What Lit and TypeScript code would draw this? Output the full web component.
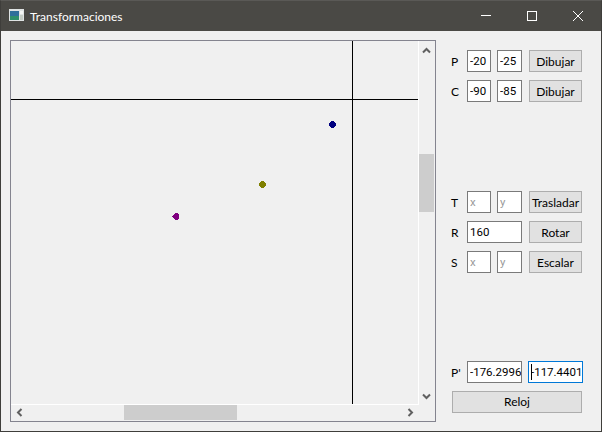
import { LitElement, css, html, svg } from 'lit';
import { customElement } from 'lit/decorators.js';

const chevron = (d: string) => html`<svg class="arrow" width="16" height="16" viewBox="0 0 16 16"><path d=${d} fill="none" stroke="#606060" stroke-width="2"></path></svg>`;

const ROUND = 'M2 0H5V1H6V2H7V5H6V6H5V7H2V6H1V5H0V2H1V1H2Z';
// the purple one has a stray pixel on its left side
const NUBBED = 'M3 0H6V1H7V6H6V7H3V6H2V5H1V4H0V3H1V2H2V1H3Z';

// 7px pixel-stepped dot, x/y is the top left of its box
const dot = (x: number, y: number, color: string, d = ROUND) => svg`<path transform="translate(${x} ${y})" fill=${color} shape-rendering="crispEdges" d=${d}></path>`;

@customElement('app-root')
export class AppRoot extends LitElement {
  static styles = css`
    :host {
      display: block;
      width: 602px;
      height: 432px;
      font-family: Lato, "Open Sans", sans-serif;
      font-size: 12px;
      color: #000;
    }

    .window {
      box-sizing: border-box;
      width: 602px;
      height: 432px;
      display: flex;
      flex-direction: column;
      background: #f0f0f0;
      border: 1px solid #3f3e3b;
      border-top-color: #5a5956;
    }

    .titlebar {
      height: 30px;
      flex: none;
      display: flex;
      align-items: center;
      background: #4a4945;
      color: #fff;
    }

    .app-icon {
      margin: -2px 6px 0 8px;
      flex: none;
    }

    .title {
      flex: 1;
    }

    .ctl {
      width: 46px;
      height: 30px;
      display: flex;
      align-items: center;
      justify-content: center;
    }

    .body {
      flex: 1;
      display: flex;
      padding: 9px 0 0 9px;
      gap: 15px;
    }

    .frame {
      box-sizing: border-box;
      width: 426px;
      height: 382px;
      border: 1px solid #84848f;
      display: grid;
      grid-template-columns: 408px 16px;
      grid-template-rows: 364px 16px;
    }

    .view {
      border-right: 1px solid #fff;
      border-bottom: 1px solid #fff;
      overflow: hidden;
    }

    .view svg {
      display: block;
    }

    .vbar,
    .hbar {
      display: flex;
      justify-content: space-between;
      position: relative;
    }

    .vbar {
      flex-direction: column;
    }

    .arrow {
      display: block;
    }

    .vbar .thumb {
      position: absolute;
      left: 0;
      top: 113px;
      width: 15px;
      height: 58px;
      background: #cdcdcd;
    }

    .hbar .thumb {
      position: absolute;
      left: 113px;
      top: 0;
      width: 113px;
      height: 15px;
      background: #cdcdcd;
    }

    .panel {
      display: flex;
      flex-direction: column;
      padding-top: 10px;
      gap: 8px;
    }

    .row {
      display: flex;
      height: 22px;
      align-items: center;
    }

    .row.sep-t {
      margin-top: 81px;
    }

    .row.sep-p {
      margin-top: 80px;
    }

    .lbl {
      width: 16px;
      flex: none;
    }

    input {
      box-sizing: border-box;
      height: 22px;
      padding: 0 2px;
      margin: 0;
      border: 1px solid #7a7a7a;
      border-radius: 0;
      background: #fff;
      font-family: Roboto, sans-serif;
      font-size: 11.5px;
      color: #000;
      outline: none;
      flex: none;
    }

    input::placeholder {
      color: #9a9a9a;
      opacity: 1;
    }

    .w24 {
      width: 24px;
    }

    .w25 {
      width: 25px;
      margin-left: 6px;
    }

    .w55 {
      width: 55px;
    }

    .w55.tight {
      padding-right: 0;
    }

    button {
      box-sizing: border-box;
      width: 53px;
      height: 22px;
      margin-left: 7px;
      padding: 0;
      border: 1px solid #adadad;
      border-radius: 0;
      background: #e1e1e1;
      font: inherit;
      color: #000;
      flex: none;
    }

    .focus-wrap {
      position: relative;
      margin-left: 6px;
      display: flex;
    }

    .focus-wrap input {
      border-color: #0078d7;
    }

    .caret {
      position: absolute;
      left: 3px;
      top: 3px;
      width: 1px;
      height: 16px;
      background: #000;
    }

    button.wide {
      width: 130px;
      margin: -1px 0 0 1px;
    }
  `;

  private pair(label: string, a: string, b: string, action: string, cls = '') {
    return html`
      <div class="row ${cls}">
        <span class="lbl">${label}</span>
        <input class="w24" .value=${a} placeholder="x" />
        <input class="w25" .value=${b} placeholder="y" />
        <button>${action}</button>
      </div>
    `;
  }

  render() {
    return html`
      <div class="window">
        <div class="titlebar">
          <svg class="app-icon" width="15" height="12" viewBox="0 0 15 12">
            <rect width="15" height="12" fill="#dfe3e3"></rect>
            <rect x="1" y="2" width="9" height="5" fill="#2f6f9a"></rect>
            <rect x="1" y="7" width="9" height="4" fill="#2f8f6a"></rect>
            <rect x="11" y="2" width="3" height="3" fill="#f4f6f4"></rect>
            <rect x="11" y="6" width="3" height="5" fill="#c4ccc4"></rect>
          </svg>
          <span class="title">Transformaciones</span>
          <div class="ctl">
            <svg width="10" height="10" viewBox="0 0 10 10"><path d="M0 4.5H10" stroke="#fff"></path></svg>
          </div>
          <div class="ctl">
            <svg width="10" height="10" viewBox="0 0 10 10"><rect x=".5" y=".5" width="9" height="9" fill="none" stroke="#fff"></rect></svg>
          </div>
          <div class="ctl">
            <svg width="10" height="10" viewBox="0 0 10 10"><path d="M0 0L10 10M10 0L0 10" stroke="#fff"></path></svg>
          </div>
        </div>
        <div class="body">
          <div class="frame">
            <div class="view">
              <svg width="407" height="363" viewBox="0 0 407 363">
                <path d="M341.5 0V363M0 58.5H407" stroke="#000" shape-rendering="crispEdges"></path>
                ${dot(318, 80, '#000080')}
                ${dot(248, 140, '#808000')}
                ${dot(161, 172, '#800080', NUBBED)}
              </svg>
            </div>
            <div class="vbar">
              ${chevron('M4 11.5L7.5 8L11 11.5')}
              <div class="thumb"></div>
              ${chevron('M4 5.5L7.5 9L11 5.5')}
            </div>
            <div class="hbar">
              ${chevron('M10.5 4L7 7.5L10.5 11')}
              <div class="thumb"></div>
              ${chevron('M5.5 4L9 7.5L5.5 11')}
            </div>
            <div></div>
          </div>
          <div class="panel">
            ${this.pair('P', '-20', '-25', 'Dibujar')}
            ${this.pair('C', '-90', '-85', 'Dibujar')}
            ${this.pair('T', '', '', 'Trasladar', 'sep-t')}
            <div class="row">
              <span class="lbl">R</span>
              <input class="w55" .value=${'160'} />
              <button>Rotar</button>
            </div>
            ${this.pair('S', '', '', 'Escalar')}
            <div class="row sep-p">
              <span class="lbl">P'</span>
              <input class="w55 tight" .value=${'-176.29961'} />
              <div class="focus-wrap">
                <input class="w55 tight" .value=${'-117.44014'} />
                <div class="caret"></div>
              </div>
            </div>
            <div class="row">
              <button class="wide">Reloj</button>
            </div>
          </div>
        </div>
      </div>
    `;
  }
}
